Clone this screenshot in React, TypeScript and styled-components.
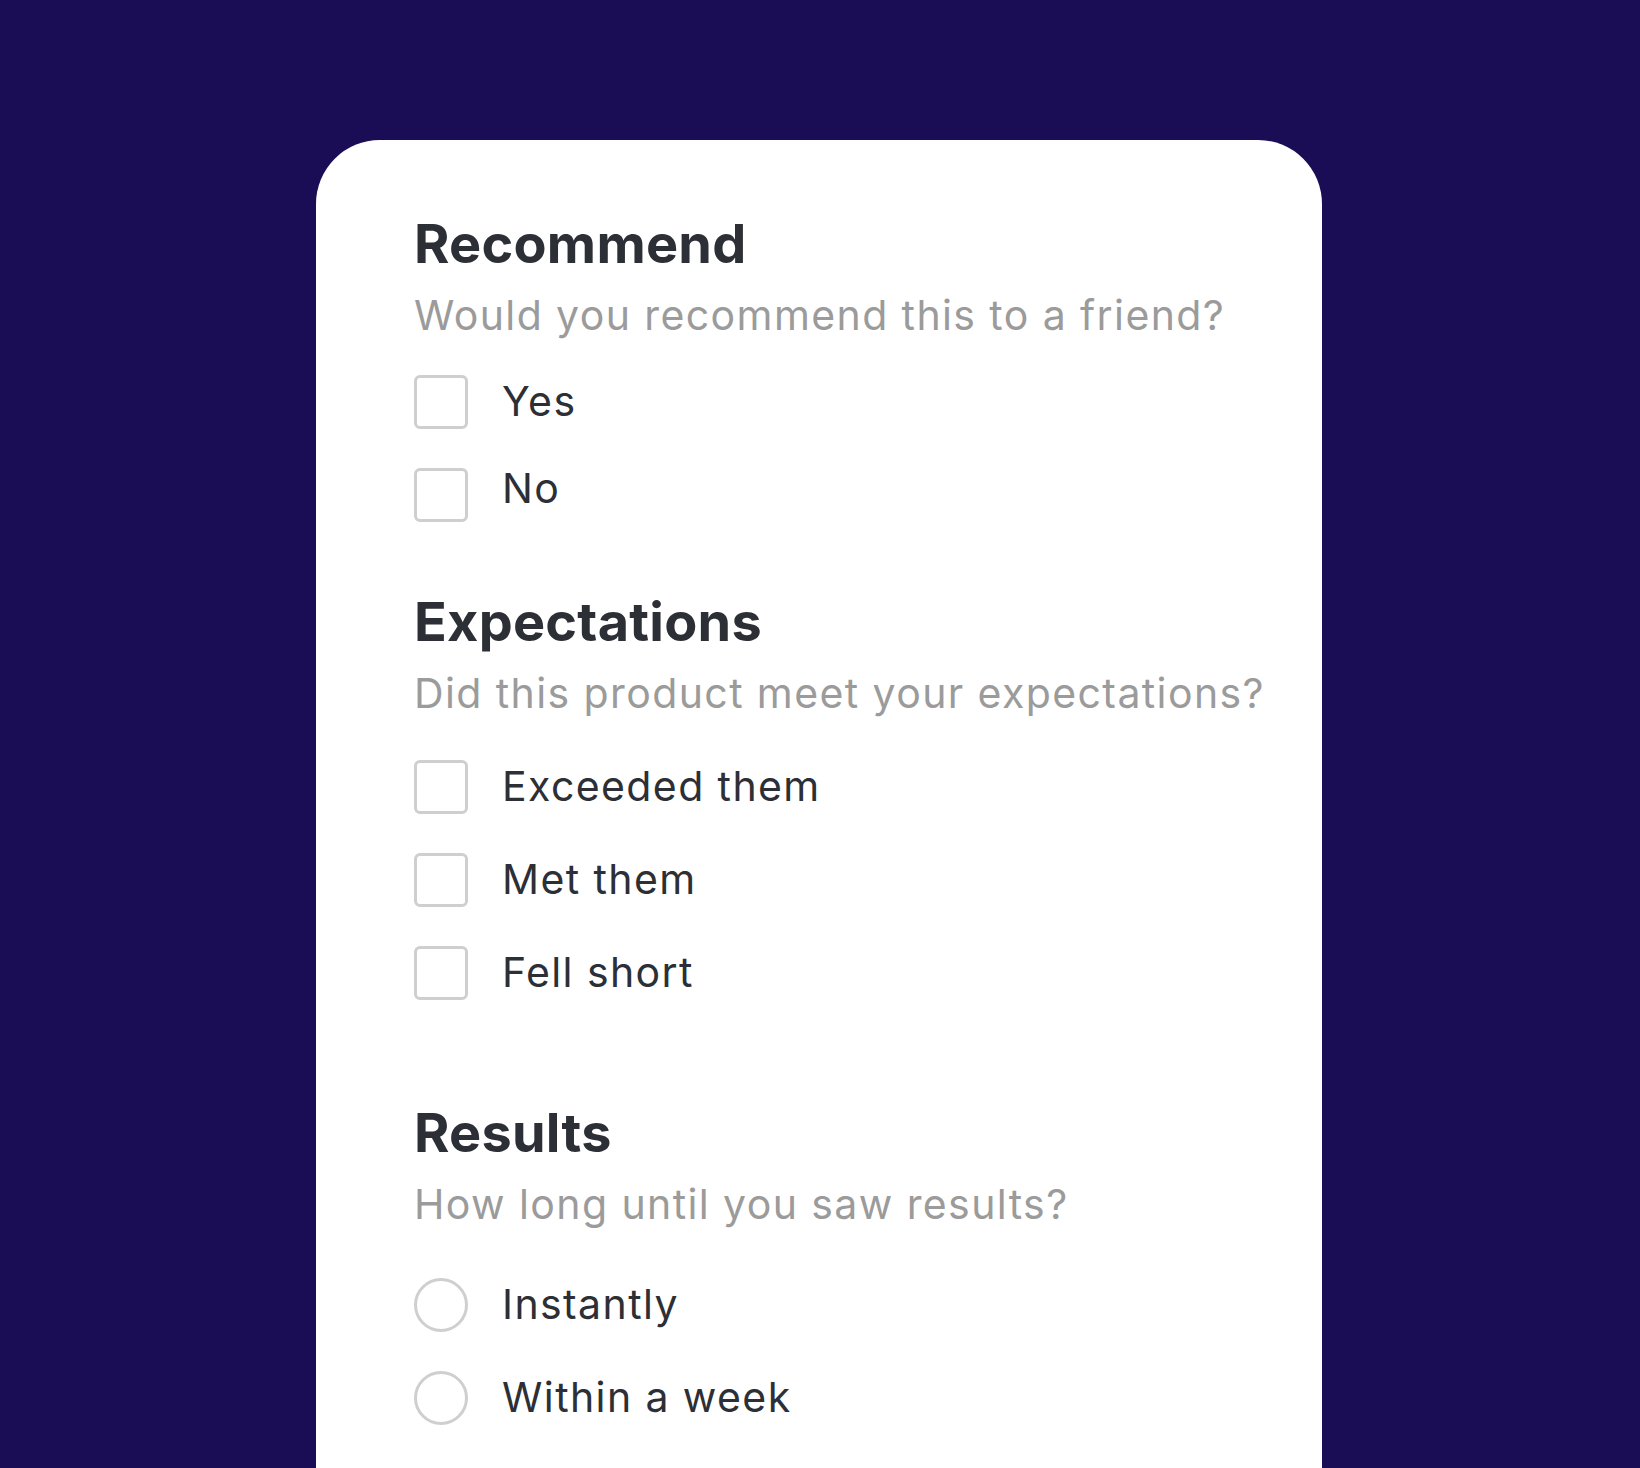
import React from "react";
import styled, { createGlobalStyle } from "styled-components";

const Global = createGlobalStyle`
  html, body {
    margin: 0;
    padding: 0;
    background: #1a0c55;
  }
  body {
    font-family: Inter, "Noto Sans", sans-serif;
    -webkit-font-smoothing: antialiased;
  }
`;

const Page = styled.div`
  width: 1640px;
  height: 1468px;
  overflow: hidden;
  background: #1a0c55;
  display: flex;
  justify-content: flex-start;
  padding: 140px 0 0 316px;
  box-sizing: border-box;
`;

const Card = styled.div`
  width: 1006px;
  min-height: 1500px;
  background: #ffffff;
  border-radius: 64px;
  box-sizing: border-box;
  padding: 72px 0 0 98px;
  display: flex;
  flex-direction: column;
`;

const Section = styled.section<{ $top: number; $listGap: number }>`
  display: flex;
  flex-direction: column;
  margin-top: ${(p) => p.$top}px;
  & > ul {
    margin-top: ${(p) => p.$listGap}px;
  }
`;

const Heading = styled.h2`
  margin: 0;
  font-size: 54px;
  line-height: 64px;
  font-weight: 700;
  color: #2c2f35;
  letter-spacing: 0.25px;
`;

const Subtitle = styled.p`
  margin: 14px 0 0;
  font-size: 41px;
  line-height: 50px;
  font-weight: 400;
  color: #9b9b9b;
  letter-spacing: 1.4px;
`;

const List = styled.ul`
  list-style: none;
  margin: 0;
  padding: 0;
  display: flex;
  flex-direction: column;
  gap: 39px;
`;

const Option = styled.li`
  display: flex;
  align-items: center;
  gap: 34px;
  height: 54px;
`;

const Box = styled.span<{ $round?: boolean }>`
  width: 54px;
  height: 54px;
  box-sizing: border-box;
  border: 3px solid #cfcfcf;
  border-radius: ${(p) => (p.$round ? "50%" : "6px")};
  background: #fff;
  flex-shrink: 0;
`;

const Label = styled.span<{ $lift: number }>`
  font-size: 41px;
  line-height: 54px;
  color: #2c2f35;
  letter-spacing: 1.4px;
  margin-top: ${(p) => -3 - p.$lift}px;
`;

type Opt = { label: string; lift?: number };

type Q = {
  title: string;
  sub: string;
  options: Opt[];
  round?: boolean;
  top: number;
  listGap: number;
};

const questions: Q[] = [
  {
    title: "Recommend",
    sub: "Would you recommend this to a friend?",
    options: [{ label: "Yes" }, { label: "No", lift: 12 }],
    top: 0,
    listGap: 35,
  },
  {
    title: "Expectations",
    sub: "Did this product meet your expectations?",
    options: [
      { label: "Exceeded them" },
      { label: "Met them" },
      { label: "Fell short" },
    ],
    top: 68,
    listGap: 42,
  },
  {
    title: "Results",
    sub: "How long until you saw results?",
    options: [{ label: "Instantly" }, { label: "Within a week" }],
    round: true,
    top: 101,
    listGap: 49,
  },
];

export default function App() {
  return (
    <>
      <Global />
      <Page>
        <Card>
          {questions.map((q) => (
            <Section key={q.title} $top={q.top} $listGap={q.listGap}>
              <Heading>{q.title}</Heading>
              <Subtitle>{q.sub}</Subtitle>
              <List>
                {q.options.map((o) => (
                  <Option key={o.label}>
                    <Box $round={q.round} />
                    <Label $lift={o.lift ?? 0}>{o.label}</Label>
                  </Option>
                ))}
              </List>
            </Section>
          ))}
        </Card>
      </Page>
    </>
  );
}
